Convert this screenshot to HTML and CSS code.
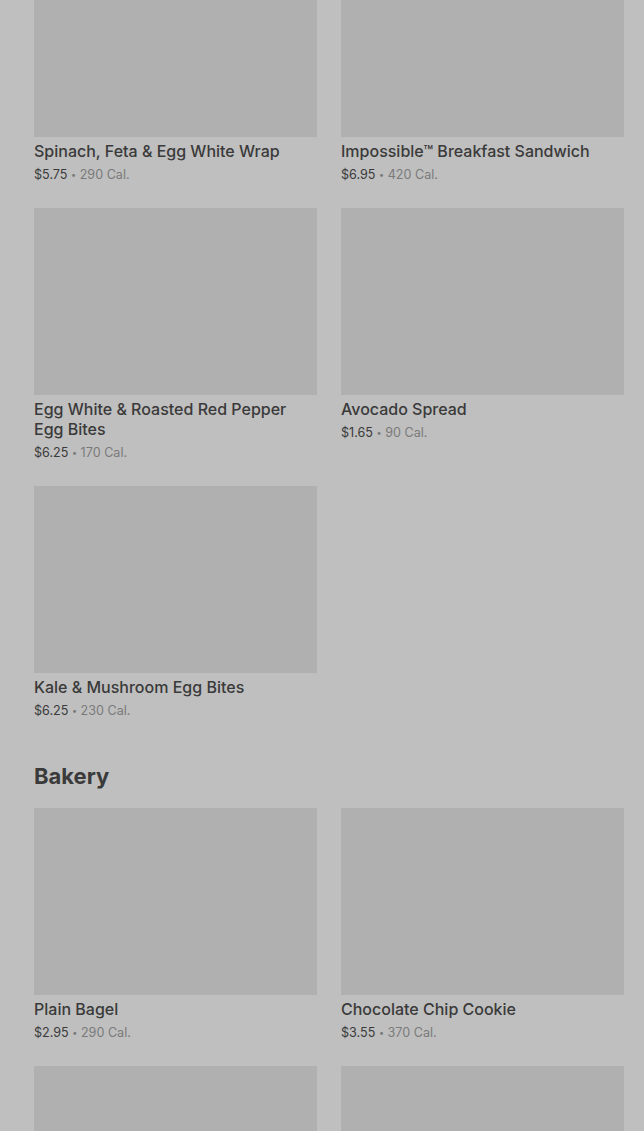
FILE: index.html
```html
<!DOCTYPE html>
<html lang="en">
<head>
<meta charset="utf-8">
<title>Menu</title>
<link rel="stylesheet" href="styles.css">
</head>
<body>
<main class="menu">
  <section class="category">
    <div class="grid">
      <article class="item">
        <div class="thumb"></div>
        <h3 class="name">Spinach, Feta &amp; Egg White Wrap</h3>
        <p class="meta"><span class="price">$5.75</span> <span class="dot">•</span> <span class="cal">290 Cal.</span></p>
      </article>
      <article class="item">
        <div class="thumb"></div>
        <h3 class="name">Impossible™ Breakfast Sandwich</h3>
        <p class="meta"><span class="price">$6.95</span> <span class="dot">•</span> <span class="cal">420 Cal.</span></p>
      </article>
      <article class="item">
        <div class="thumb"></div>
        <h3 class="name">Egg White &amp; Roasted Red Pepper Egg Bites</h3>
        <p class="meta"><span class="price">$6.25</span> <span class="dot">•</span> <span class="cal">170 Cal.</span></p>
      </article>
      <article class="item">
        <div class="thumb"></div>
        <h3 class="name">Avocado Spread</h3>
        <p class="meta"><span class="price">$1.65</span> <span class="dot">•</span> <span class="cal">90 Cal.</span></p>
      </article>
      <article class="item">
        <div class="thumb"></div>
        <h3 class="name">Kale &amp; Mushroom Egg Bites</h3>
        <p class="meta"><span class="price">$6.25</span> <span class="dot">•</span> <span class="cal">230 Cal.</span></p>
      </article>
    </div>
  </section>
  <section class="category">
    <h2 class="heading">Bakery</h2>
    <div class="grid">
      <article class="item">
        <div class="thumb"></div>
        <h3 class="name">Plain Bagel</h3>
        <p class="meta"><span class="price">$2.95</span> <span class="dot">•</span> <span class="cal">290 Cal.</span></p>
      </article>
      <article class="item">
        <div class="thumb"></div>
        <h3 class="name">Chocolate Chip Cookie</h3>
        <p class="meta"><span class="price">$3.55</span> <span class="dot">•</span> <span class="cal">370 Cal.</span></p>
      </article>
      <article class="item">
        <div class="thumb"></div>
      </article>
      <article class="item">
        <div class="thumb"></div>
      </article>
    </div>
  </section>
</main>
</body>
</html>
```

FILE: styles.css
```css
html, body {
  margin: 0;
  padding: 0;
  background: #bfbfbf;
  overflow: hidden;
}

body {
  font-family: Inter, "Liberation Sans", sans-serif;
  color: #383838;
}

.menu {
  margin-top: -50px;
  padding: 0 20px 0 34px;
}

.grid {
  display: grid;
  grid-template-columns: 1fr 1fr;
  column-gap: 24px;
  row-gap: 24px;
}

.item {
  display: flex;
  flex-direction: column;
}

.thumb {
  height: 187px;
  background: #b0b0b0;
}

.name {
  margin: 4px 0 0;
  font-size: 16px;
  line-height: 20px;
  font-weight: 500;
  color: #3a3a3a;
}

.meta {
  margin: 4px 0 0;
  height: 19px;
  font-size: 12.6px;
  line-height: 19px;
  color: #3a3a3a;
}

.dot {
  font-size: 9px;
  line-height: 0;
  vertical-align: 1px;
  color: #777;
}

.cal {
  color: #7a7a7a;
}

.heading {
  margin: 42px 0 18px;
  font-size: 22px;
  line-height: 28px;
  font-weight: 700;
  color: #3a3a3a;
}
```
